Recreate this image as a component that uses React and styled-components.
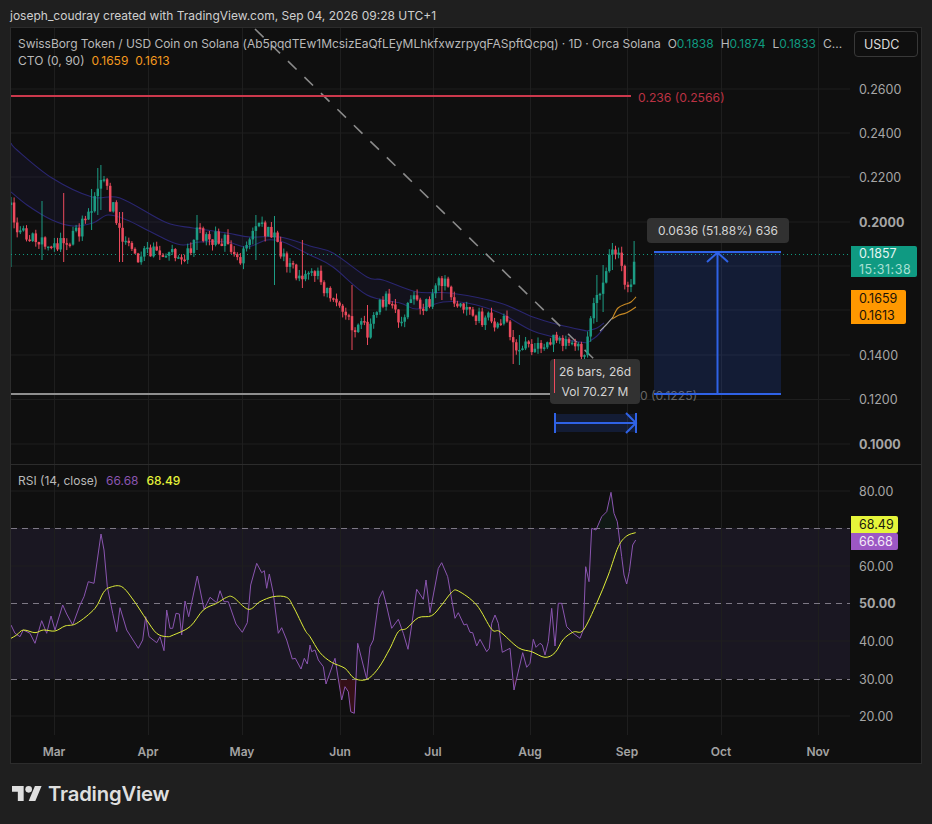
import React from 'react';
import styled, { createGlobalStyle } from 'styled-components';

const colors = {
  page: '#1f1f1f',
  chart: '#0f0f0f',
  border: '#2c2c2c',
  grid: '#1e1e1e',
  axis: '#a6a6a6',
  legend: '#b9b9b9',
  green: '#0f9a80',
  candleUp: '#1c9c84',
  candleDown: '#ec4a5d',
  orange: '#f59a1e',
  blue: '#2f62e6',
  purple: '#8a55b0',
  yellow: '#dfee38',
};

const GlobalStyle = createGlobalStyle`
  html, body {
    margin: 0;
    padding: 0;
    background: ${colors.page};
  }
  body {
    font-family: Inter, "Liberation Sans", sans-serif;
  }
`;

const Page = styled.div`
  width: 932px;
  height: 824px;
  padding: 0 10px;
  box-sizing: border-box;
  overflow: hidden;
`;

const Credit = styled.div`
  height: 27px;
  line-height: 31px;
  font-size: 12px;
  color: #cfcfcf;
  white-space: nowrap;
`;

const Frame = styled.div`
  width: 912px;
  height: 737px;
  box-sizing: border-box;
  border: 1px solid ${colors.border};
  background: ${colors.chart};
`;

const Pane = styled.div`
  display: flex;
  height: ${(p) => p.$height}px;
  border-bottom: ${(p) => (p.$divider ? `1px solid ${colors.border}` : 'none')};
`;

const Plot = styled.div`
  position: relative;
  width: 839px;
  flex: none;
`;

const Scale = styled.div`
  position: relative;
  flex: 1;
`;

const Drawing = styled.svg`
  display: block;
  width: 100%;
  height: 100%;
`;

const AxisText = styled.text`
  font-size: 12.5px;
  font-weight: ${(p) => (p.$bold ? 700 : 400)};
  fill: ${colors.axis};
  dominant-baseline: central;
`;

const MonthText = styled.text`
  font-size: 12px;
  font-weight: 600;
  fill: #a3a3a3;
  text-anchor: middle;
  dominant-baseline: central;
`;

const LevelText = styled.text`
  font-size: 12.2px;
  fill: ${(p) => p.$color};
  dominant-baseline: central;
`;

const Legend = styled.div`
  position: absolute;
  left: 7px;
  top: ${(p) => p.$top}px;
  width: 830px;
  font-size: 12px;
  line-height: 17px;
  color: ${colors.legend};
`;

const LegendRow = styled.div`
  display: flex;
  gap: ${(p) => p.$gap || 7}px;
  white-space: nowrap;
`;

const SymbolTitle = styled.span`
  letter-spacing: -0.04px;
`;

const Value = styled.span`
  color: ${(p) => p.$color};
  font-weight: ${(p) => p.$weight || 400};
`;

const CurrencyButton = styled.div`
  position: absolute;
  left: 4px;
  top: 3px;
  width: 64px;
  height: 26px;
  box-sizing: border-box;
  border: 1px solid #383838;
  border-radius: 4px;
  padding-left: 9px;
  font-size: 12.5px;
  line-height: 25px;
  color: #dcdcdc;
`;

const PriceTag = styled.div`
  position: absolute;
  left: 1px;
  top: ${(p) => p.$top}px;
  width: ${(p) => p.$width}px;
  box-sizing: border-box;
  padding-left: 8px;
  background: ${(p) => p.$bg};
  color: ${(p) => p.$color};
  border-radius: 0 2px 2px 0;
  font-size: 12.5px;
  line-height: ${(p) => p.$line}px;
`;

const Countdown = styled.div`
  color: #a8e0d4;
  letter-spacing: 0.5px;
`;

const Bubble = styled.div`
  position: absolute;
  left: ${(p) => p.$left}px;
  top: ${(p) => p.$top}px;
  width: ${(p) => p.$width}px;
  height: ${(p) => p.$height}px;
  box-sizing: border-box;
  display: flex;
  flex-direction: column;
  align-items: center;
  justify-content: center;
  gap: 3px;
  background: #313131;
  border-radius: 4px;
  color: #d4d4d4;
  font-size: 12px;
  line-height: 17px;
  white-space: nowrap;
`;

const WickOverBubble = styled.div`
  position: absolute;
  left: 4px;
  top: 0;
  width: 1px;
  height: 34px;
  background: ${colors.candleDown};
`;

const Brand = styled.div`
  display: flex;
  align-items: center;
  gap: 6px;
  height: 59px;
  padding-left: 2px;
  color: #dedede;
  font-size: 20.3px;
  font-weight: 600;
  letter-spacing: -0.2px;
`;

// seeded so the candles come out the same on every load
let seed = 41;
const rand = () => {
  seed = (seed * 16807) % 2147483647;
  return seed / 2147483647;
};

const closeKeys = [
  [11, 210], [20, 233], [30, 238], [40, 240], [50, 240], [60, 243], [70, 240], [78, 232], [85, 222], [92, 215],
  [97, 190], [101, 176], [106, 180], [108, 203], [114, 210], [118, 225], [122, 235], [128, 240], [135, 250],
  [140, 258], [145, 255], [150, 250], [160, 258], [165, 265], [170, 255], [178, 250], [185, 255], [192, 245],
  [197, 230], [205, 237], [212, 238], [222, 240], [228, 242], [240, 256], [245, 255], [252, 232], [258, 228],
  [268, 230], [276, 240], [282, 252], [290, 270], [300, 275], [310, 270], [320, 280], [328, 292], [340, 300],
  [348, 320], [355, 335], [360, 320], [368, 335], [378, 310], [385, 295], [390, 298], [398, 315], [405, 317],
  [412, 300], [420, 305], [430, 307], [437, 285], [445, 285], [452, 295], [458, 310], [470, 310], [480, 318],
  [490, 320], [497, 325], [505, 320], [510, 340], [516, 350], [525, 348], [535, 348], [545, 350], [552, 340],
  [558, 345], [565, 345], [575, 350], [585, 350], [590, 325], [596, 295], [603, 280], [608, 265], [612, 250],
  [618, 258], [625, 280], [630, 292], [634, 262], [637, 254],
];

// long wicks that stand out on the chart: x, high, low
const wicks = [
  [11, 197, 267], [42, 201, 260], [63, 193, 262], [92, 189, 230], [98, 168, 215], [101, 165, 210], [121, 212, 262],
  [198, 215, 250], [257, 215, 260], [273, 216, 285], [301, 240, 288], [352, 285, 350], [367, 305, 345],
  [443, 276, 300], [514, 330, 364], [520, 335, 365], [555, 335, 352], [596, 275, 322], [603, 265, 312], [611, 243, 270],
  [633, 241, 270],
];

const lerp = (keys, x) => {
  for (let i = 1; i < keys.length; i++) {
    if (x <= keys[i][0]) {
      const [x0, y0] = keys[i - 1];
      const [x1, y1] = keys[i];
      return y0 + ((y1 - y0) * (x - x0)) / (x1 - x0);
    }
  }
  return keys[keys.length - 1][1];
};

const buildBars = () => {
  const bars = [];
  let prev = 205;
  for (let x = 11; x <= 636.5; x += 3.1) {
    const close = lerp(closeKeys, x) + (x > 625 ? 0 : (rand() - 0.5) * 15);
    const top = Math.min(prev, close);
    const bottom = Math.max(prev, close);
    let high = top - rand() * 6;
    let low = bottom + rand() * 6;
    const special = wicks.find((w) => Math.abs(w[0] - x) < 1.6);
    if (special) {
      high = special[1];
      low = special[2];
    }
    bars.push({ x, top, bottom: Math.max(bottom, top + 1.5), high, low, up: close < prev });
    prev = close;
  }
  return bars;
};

const bars = buildBars();

const upperBand = [
  [11, 143], [17, 150], [52, 178], [92, 197], [120, 198], [165, 222], [193, 228], [227, 233], [250, 237], [280, 237],
  [310, 246], [333, 253], [367, 277], [383, 280], [417, 292], [450, 293], [500, 303], [533, 317], [560, 325], [587, 331],
];
const lowerBand = [
  [11, 192], [27, 205], [52, 220], [73, 226], [93, 223], [108, 215], [127, 220], [147, 230], [167, 240], [183, 245],
  [200, 242], [227, 242], [247, 247], [267, 240], [283, 242], [310, 255], [333, 267], [367, 295], [400, 303],
  [417, 309], [443, 302], [467, 303], [500, 313], [533, 331], [567, 340], [587, 343],
];

// catmull-rom through the points, written as cubic segments
const smooth = (pts) => {
  let d = `M${pts[0][0]} ${pts[0][1]}`;
  for (let i = 0; i < pts.length - 1; i++) {
    const p0 = pts[i - 1] || pts[i];
    const p1 = pts[i];
    const p2 = pts[i + 1];
    const p3 = pts[i + 2] || p2;
    const c1x = p1[0] + (p2[0] - p0[0]) / 6;
    const c1y = p1[1] + (p2[1] - p0[1]) / 6;
    const c2x = p2[0] - (p3[0] - p1[0]) / 6;
    const c2y = p2[1] - (p3[1] - p1[1]) / 6;
    d += ` C${c1x.toFixed(1)} ${c1y.toFixed(1)} ${c2x.toFixed(1)} ${c2y.toFixed(1)} ${p2[0]} ${p2[1]}`;
  }
  return d;
};

const fromLeft = (list) => list.map(([x, y]) => [x / 3, 460 + y / 3]);
const fromRight = (list) => list.map(([x, y]) => [310 + x / 3, 460 + y / 3]);

const rsiLine = [
  ...fromLeft([
    [33, 495], [45, 520], [60, 530], [70, 510], [90, 520], [105, 550], [125, 482], [140, 520], [153, 468], [165, 510],
    [188, 435], [200, 462], [218, 495], [240, 435], [252, 410], [265, 365], [282, 370], [303, 222], [312, 270],
    [322, 380], [338, 460], [350, 515], [360, 443], [380, 510], [415, 565], [428, 540], [437, 470], [447, 530],
    [470, 548], [480, 530], [492, 572], [500, 450], [510, 505], [518, 505], [528, 460], [538, 462], [545, 525],
    [555, 423], [566, 470], [592, 348], [612, 448], [630, 412], [650, 428], [660, 392], [672, 425], [685, 425],
    [708, 492], [727, 517], [742, 488], [752, 375], [770, 310], [785, 338], [793, 332], [800, 385], [808, 342],
    [820, 400], [835, 520], [845, 503], [860, 540], [877, 597], [886, 595], [903, 627], [913, 595], [922, 612],
  ]),
  ...fromRight([
    [0, 555], [5, 575], [15, 570], [25, 600], [40, 620], [48, 672], [75, 595], [95, 720], [105, 680], [115, 695],
    [122, 755], [133, 760], [143, 550], [170, 657], [180, 560], [190, 540], [207, 415], [218, 392], [228, 430],
    [245, 505], [265, 478], [280, 520], [294, 568], [305, 495], [320, 388], [340, 418], [348, 360], [360, 458],
    [385, 325], [395, 308], [413, 350], [435, 475], [445, 458], [462, 495], [470, 492], [480, 517], [488, 518],
    [500, 558], [510, 538], [530, 575], [538, 565], [545, 490], [555, 465], [565, 490], [577, 577], [590, 570],
    [600, 565], [612, 690], [638, 578], [650, 622], [660, 610], [670, 538], [678, 562], [690, 550], [697, 555],
    [705, 585], [715, 545], [725, 445], [735, 558], [745, 430], [755, 430], [770, 500], [790, 520], [810, 535],
    [820, 510], [827, 320], [837, 365], [845, 205], [858, 210], [875, 170], [890, 155], [903, 97], [912, 160],
    [922, 185], [935, 290], [942, 345], [950, 372], [958, 335], [968, 255], [977, 240],
  ]),
];

const rsiAverage = [
  ...fromLeft([
    [33, 535], [50, 525], [70, 510], [105, 518], [130, 510], [165, 513], [195, 498], [230, 490], [285, 445], [310, 398],
    [330, 382], [365, 380], [400, 420], [440, 480], [470, 520], [500, 530], [520, 525], [570, 500], [610, 450],
    [650, 430], [680, 412], [700, 412], [745, 448], [780, 425], [820, 410], [860, 412], [880, 440], [915, 510],
  ]),
  ...fromRight([
    [0, 530], [30, 578], [65, 607], [105, 625], [133, 655], [170, 658], [205, 625], [240, 565], [265, 515], [290, 505],
    [325, 473], [365, 467], [395, 435], [425, 397], [445, 393], [500, 435], [545, 508], [570, 515], [625, 563],
    [665, 575], [705, 592], [735, 578], [760, 538], [790, 516], [820, 510], [860, 430], [895, 345], [925, 260],
    [950, 228], [977, 218],
  ]),
];

const months = [
  ['Mar', 54], ['Apr', 148], ['May', 242], ['Jun', 340], ['Jul', 433], ['Aug', 530], ['Sep', 627], ['Oct', 721], ['Nov', 818],
];
const monthLines = months.map((m) => m[1]);
const priceTicks = [
  ['0.2600', 89], ['0.2400', 133], ['0.2200', 177], ['0.2000', 222, true], ['0.1400', 355], ['0.1200', 399.5], ['0.1000', 444, true],
];
const priceLines = [89, 133, 177, 222, 266, 310, 355, 399.5, 444];
const rsiTicks = [
  ['80.00', 491], ['60.00', 566], ['50.00', 603, true], ['40.00', 641], ['30.00', 679], ['20.00', 716],
];

const GridLines = ({ rows, top, bottom }) => (
  <g stroke={colors.grid} strokeWidth="1">
    {monthLines.map((x) => (
      <line key={x} x1={x + 0.5} x2={x + 0.5} y1={top} y2={bottom} />
    ))}
    {rows.map((y) => (
      <line key={y} x1="11" x2="850" y1={y} y2={y} />
    ))}
  </g>
);

const Candles = () => (
  <g>
    {bars.map((b) => {
      const color = b.up ? colors.candleUp : colors.candleDown;
      return (
        <g key={b.x}>
          <line x1={b.x} x2={b.x} y1={b.high} y2={b.low} stroke={color} strokeWidth="1" />
          <rect x={b.x - 1.25} y={b.top} width="2.5" height={b.bottom - b.top} fill={color} />
        </g>
      );
    })}
  </g>
);

const Bands = () => (
  <g fill="none">
    <path
      d={`${smooth(upperBand)} L${lowerBand[lowerBand.length - 1].join(' ')} ${smooth([...lowerBand].reverse()).replace('M', 'L')} Z`}
      fill="#3b3397"
      fillOpacity="0.1"
    />
    <path d={smooth(upperBand)} stroke="#2a2670" strokeWidth="1.1" />
    <path d={smooth(lowerBand)} stroke="#2a2670" strokeWidth="1.1" />
    <path d={smooth([[587, 331], [597, 328], [604, 323]])} stroke="#2a2670" strokeWidth="1.1" />
    <path d={smooth([[587, 343], [597, 336], [604, 328]])} stroke="#2a2670" strokeWidth="1.1" />
    <path d={smooth([[600, 331], [606, 325], [613, 317]])} stroke="#a8a8a8" strokeWidth="1.1" />
    <path d={smooth([[613, 317], [618, 308], [626, 304], [631, 302], [636, 297]])} stroke="#c98a24" strokeWidth="1.1" />
    <path d={smooth([[612, 319], [619, 315], [626, 313], [636, 307]])} stroke="#c98a24" strokeWidth="1.1" />
  </g>
);

const MeasureTools = () => (
  <g>
    <rect x="654" y="252" width="127" height="142" fill="#2962ff" fillOpacity="0.16" />
    <rect x="555" y="414" width="81" height="18" fill="#2962ff" fillOpacity="0.16" />
    <g stroke={colors.blue} strokeWidth="2" fill="none">
      <path d="M654 252H781M654 394H781M717.5 394V253M707 262L717.5 252.5L728 262" />
      <path d="M555 413V433M555 423H636M636 413V433M626 413L636 423L626 433" />
    </g>
  </g>
);

const MainChart = () => (
  <Drawing viewBox="11 28 839 436">
    <GridLines rows={priceLines} top={28} bottom={464} />
    <Bands />
    <line x1="11" x2="850" y1="254.5" y2="254.5" stroke={colors.green} strokeWidth="1" strokeDasharray="1 3" />
    <line x1="255" y1="29" x2="597" y2="362" stroke="#8a8a8a" strokeWidth="1.6" strokeDasharray="12 11" />
    <Candles />
    <line x1="11" x2="631" y1="96" y2="96" stroke="#cb384c" strokeWidth="2" />
    <LevelText x="638" y="97" $color="#bb3244">0.236 (0.2566)</LevelText>
    <line x1="11" x2="552" y1="394" y2="394" stroke="#8f8f8f" strokeWidth="2" />
    <LevelText x="640" y="395" $color="#666666">0 (0.1225)</LevelText>
    <MeasureTools />
  </Drawing>
);

const RsiChart = () => {
  const first = rsiLine[0];
  const last = rsiLine[rsiLine.length - 1];
  const straight = `M${rsiLine.map((p) => `${p[0].toFixed(1)} ${p[1].toFixed(1)}`).join(' L')}`;
  return (
    <Drawing viewBox="11 465 839 270">
      <defs>
        <clipPath id="below30">
          <rect x="11" y="679" width="839" height="60" />
        </clipPath>
        <clipPath id="above70">
          <rect x="11" y="465" width="839" height="63" />
        </clipPath>
      </defs>
      <rect x="11" y="528" width="839" height="151" fill="#1a1722" />
      <GridLines rows={[491, 566, 641, 716]} top={465} bottom={735} />
      <path d={`${straight} L${last[0]} 679 L${first[0]} 679 Z`} fill="#7a1428" fillOpacity="0.35" clipPath="url(#below30)" />
      <path d={`${straight} L${last[0]} 528 L${first[0]} 528 Z`} fill="#14432f" fillOpacity="0.2" clipPath="url(#above70)" />
      <g stroke="#7d7885" strokeWidth="1" strokeDasharray="6 5">
        <line x1="11" x2="850" y1="528.5" y2="528.5" />
        <line x1="11" x2="850" y1="603.5" y2="603.5" />
        <line x1="11" x2="850" y1="679.5" y2="679.5" />
      </g>
      <path d={straight} fill="none" stroke={colors.purple} strokeWidth="1" strokeLinejoin="round" />
      <path d={smooth(rsiAverage)} fill="none" stroke={colors.yellow} strokeWidth="1" />
    </Drawing>
  );
};

const Logo = () => (
  <svg width="30" height="15" viewBox="0 4 36 18" fill="currentColor">
    <path d="M14 22H7V11H0V4h14v18zM28 22h-8l7.5-18h8L28 22z" />
    <circle cx="20" cy="8" r="4" />
  </svg>
);

export default function App() {
  return (
    <Page>
      <GlobalStyle />
      <Credit>joseph_coudray created with TradingView.com, Sep 04, 2026 09:28 UTC+1</Credit>
      <Frame>
        <Pane $height={436} $divider>
          <Plot>
            <MainChart />
            <Legend $top={7}>
              <LegendRow>
                <SymbolTitle>SwissBorg Token / USD Coin on Solana (Ab5pqdTEw1McsizEaQfLEyMLhkfxwzrpyqFASpftQcpq) · 1D · Orca Solana</SymbolTitle>
                <span>O<Value $color={colors.green}>0.1838</Value></span>
                <span>H<Value $color={colors.green}>0.1874</Value></span>
                <span>L<Value $color={colors.green}>0.1833</Value></span>
                <span>C...</span>
              </LegendRow>
              <LegendRow>
                <span>CTO (0, 90)</span>
                <Value $color={colors.orange}>0.1659</Value>
                <Value $color={colors.orange}>0.1613</Value>
              </LegendRow>
            </Legend>
            <Bubble $left={636} $top={190} $width={142} $height={25}>0.0636 (51.88%) 636</Bubble>
            <Bubble $left={539} $top={331} $width={90} $height={45}>
              <WickOverBubble />
              <span>26 bars, 26d</span>
              <span>Vol 70.27 M</span>
            </Bubble>
          </Plot>
          <Scale>
            <Drawing viewBox="850 28 71 436">
              {priceTicks.map(([label, y, bold]) => (
                <AxisText key={label} x="859" y={y} $bold={bold}>{label}</AxisText>
              ))}
            </Drawing>
            <CurrencyButton>USDC</CurrencyButton>
            <PriceTag $top={218} $width={66} $bg="#0f9a82" $color="#e3f5f1" $line={15.5}>
              0.1857
              <Countdown>15:31:38</Countdown>
            </PriceTag>
            <PriceTag $top={262} $width={55} $bg="#ff9800" $color="#1a1208" $line={17}>
              0.1659
              <br />
              0.1613
            </PriceTag>
          </Scale>
        </Pane>
        <Pane $height={270}>
          <Plot>
            <RsiChart />
            <Legend $top={7}>
              <LegendRow $gap={8}>
                <span>RSI (14, close)</span>
                <Value $color={colors.purple}>66.68</Value>
                <Value $color="#e4f23a" $weight={500}>68.49</Value>
              </LegendRow>
            </Legend>
          </Plot>
          <Scale>
            <Drawing viewBox="850 465 71 270">
              {rsiTicks.map(([label, y, bold]) => (
                <AxisText key={label} x="859" y={y} $bold={bold}>{label}</AxisText>
              ))}
            </Drawing>
            <PriceTag $top={51} $width={47} $bg="#e6f53a" $color="#1a1a10" $line={17}>68.49</PriceTag>
            <PriceTag $top={68} $width={47} $bg="#9c57c4" $color="#f3e9f8" $line={17}>66.68</PriceTag>
          </Scale>
        </Pane>
        <Pane $height={28}>
          <Drawing viewBox="11 735 910 28">
            {months.map(([label, x]) => (
              <MonthText key={label} x={x} y="751">{label}</MonthText>
            ))}
          </Drawing>
        </Pane>
      </Frame>
      <Brand>
        <Logo />
        <span>TradingView</span>
      </Brand>
    </Page>
  );
}
